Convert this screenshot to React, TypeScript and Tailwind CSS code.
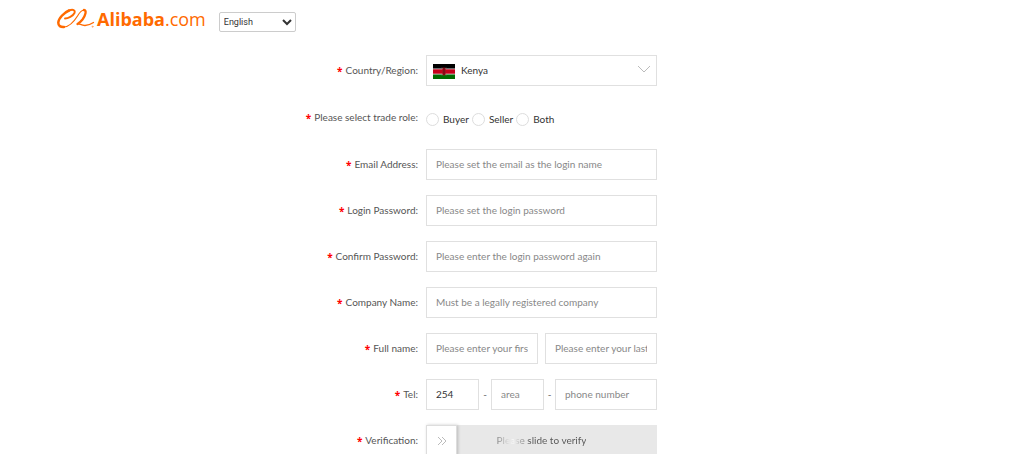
import type { InputHTMLAttributes, ReactNode } from 'react';

const inputClass =
  'block h-[31px] w-full min-w-0 border border-[#e0e0e0] bg-white px-[9px] pb-[2px] text-[10px] text-[#333] outline-none placeholder:text-[#888]';

function Label({ id, children }: { id: string; children: ReactNode }) {
  return (
    <label htmlFor={id} className="flex items-center justify-end gap-[3px] text-[10px] text-[#555]">
      <span className="pt-[2px] font-['Open_Sans',sans-serif] font-bold text-[#f00]">*</span>
      {children}
    </label>
  );
}

function Row({ id, label, children }: { id: string; label: string; children: ReactNode }) {
  return (
    <div className="grid grid-cols-[418fr_598fr] items-center gap-2">
      <Label id={id}>{label}</Label>
      <div className="w-full max-w-[231px]">{children}</div>
    </div>
  );
}

function Field(props: InputHTMLAttributes<HTMLInputElement>) {
  return <input className={inputClass} {...props} />;
}

function Radio({ id, label }: { id: string; label: string }) {
  return (
    <label className="flex items-center gap-1">
      <input
        id={id}
        type="radio"
        name="role"
        className="size-[13px] appearance-none rounded-full border border-[#ddd] bg-white checked:border-4 checked:border-[#ff6a00]"
      />
      {label}
    </label>
  );
}

function Logo() {
  return (
    <a href="#" aria-label="Alibaba.com" className="flex items-center gap-[2px] font-['Open_Sans',sans-serif] text-[#ff6a00]">
      <svg viewBox="0 0 38 22" className="h-[22px] w-[38px]" fill="none" stroke="currentColor" strokeLinecap="round" strokeLinejoin="round">
        <path d="M8 10.500C11 10.500 16 8 17.500 5C18.500 2 16 1 12 2.500" strokeWidth="1.900" />
        <path d="M12 2.500C7 4.500 1.500 10.500 1.300 14.500C1.200 18 3.500 19.200 7 19" strokeWidth="2.500" />
        <path d="M7 19C13 18.500 18 12 20.500 8C22.500 4.500 24.500 2.200 27 2" strokeWidth="1.200" />
        <path d="M27 2C30 2.200 28.500 7.500 25.500 11.500C23.500 14 21.500 15.500 20.500 16" strokeWidth="2.300" />
        <path d="M20.500 16C22.500 15.200 24 17.600 28 17.500C31.500 17.300 34 16.200 36.500 14.500" strokeWidth="1.300" />
        <circle cx="35.500" cy="18.700" r=".6" strokeWidth=".4" />
      </svg>
      <span className="text-[18px] leading-6 font-bold">
        Alibaba<span className="font-normal">.com</span>
      </span>
    </a>
  );
}

function Flag() {
  return (
    <svg viewBox="0 0 22 15" className="pointer-events-none absolute top-[9px] left-[7px] h-[15px] w-[22px]">
      <path fill="#ddd" d="M0 0h22v15H0z" />
      <path fill="#000" d="M0 0h22v4.500H0z" />
      <path fill="#c4001a" d="M0 5.300h22v4.400H0z" />
      <path fill="#006b00" d="M0 10.500h22v4.500H0z" />
      <path d="M9 3.500l4 8M13 3.500l-4 8" stroke="#a66" strokeWidth=".6" />
      <ellipse cx="11" cy="7.500" rx="1.800" ry="4" fill="#a01020" />
      <path d="M11 4v7" stroke="#400" strokeWidth=".6" />
    </svg>
  );
}

export default function App() {
  return (
    <div className="min-h-screen overflow-hidden bg-white font-['Lato',sans-serif]">
      <header className="flex h-[38px] items-center gap-[13px] pl-[57px]">
        <Logo />
        <select
          aria-label="Language"
          className="mt-[6px] h-5 w-[77px] rounded-xs border border-[#ccc] bg-white font-['Roboto',sans-serif] text-[9px] text-[#333]"
        >
          <option>English</option>
        </select>
      </header>
      <form className="flex flex-col gap-[15px] pt-[17px]">
        <Row id="country" label="Country/Region:">
          <div className="relative">
            <select
              id="country"
              className="block h-[31px] w-full appearance-none border border-[#e0e0e0] bg-white pr-8 pl-[34px] text-[10px] text-[#333]"
            >
              <option>Kenya</option>
            </select>
            <Flag />
            <svg viewBox="0 0 14 8" className="pointer-events-none absolute top-[10px] right-[6px] h-2 w-[14px]" fill="none" stroke="#bbb">
              <path d="M1 1l6 6 6-6" />
            </svg>
          </div>
        </Row>
        <Row id="buyer" label="Please select trade role:">
          <div className="flex h-[33px] items-center gap-[3px] pt-[3px] text-[10px] text-[#333]">
            <Radio id="buyer" label="Buyer" />
            <Radio id="seller" label="Seller" />
            <Radio id="both" label="Both" />
          </div>
        </Row>
        <Row id="email" label="Email Address:">
          <Field id="email" type="email" placeholder="Please set the email as the login name" />
        </Row>
        <Row id="password" label="Login Password:">
          <Field id="password" type="password" placeholder="Please set the login password" />
        </Row>
        <Row id="confirm" label="Confirm Password:">
          <Field id="confirm" type="password" placeholder="Please enter the login password again" />
        </Row>
        <Row id="company" label="Company Name:">
          <Field id="company" placeholder="Must be a legally registered company" />
        </Row>
        <Row id="first" label="Full name:">
          <div className="grid grid-cols-2 gap-[7px]">
            <Field id="first" placeholder="Please enter your first name" />
            <Field aria-label="Last name" placeholder="Please enter your last name" />
          </div>
        </Row>
        <Row id="tel" label="Tel:">
          <div className="grid grid-cols-[53px_12px_53px_11px_1fr] items-center text-[10px] text-[#666]">
            <Field id="tel" defaultValue="254" />
            <span className="text-center">-</span>
            <Field aria-label="Area code" placeholder="area" />
            <span className="text-center">-</span>
            <Field aria-label="Phone number" placeholder="phone number" />
          </div>
        </Row>
        <Row id="slider" label="Verification:">
          <div className="relative flex h-[31px] items-center justify-center bg-[#e8e8e8] text-[10px]">
            <span className="bg-linear-to-r from-[#888] from-0% via-white via-18% to-[#555] to-36% bg-clip-text text-transparent">
              Please slide to verify
            </span>
            <button
              id="slider"
              type="button"
              aria-label="Slide"
              className="absolute top-0 left-0 flex size-[31px] items-center justify-center border border-[#ddd] bg-white shadow-[1px_0_3px_#0003]"
            >
              <svg viewBox="0 0 10 10" className="size-[10px]" fill="none" stroke="#bbb">
                <path d="M1 1l4 4-4 4M5 1l4 4-4 4" />
              </svg>
            </button>
          </div>
        </Row>
      </form>
    </div>
  );
}
